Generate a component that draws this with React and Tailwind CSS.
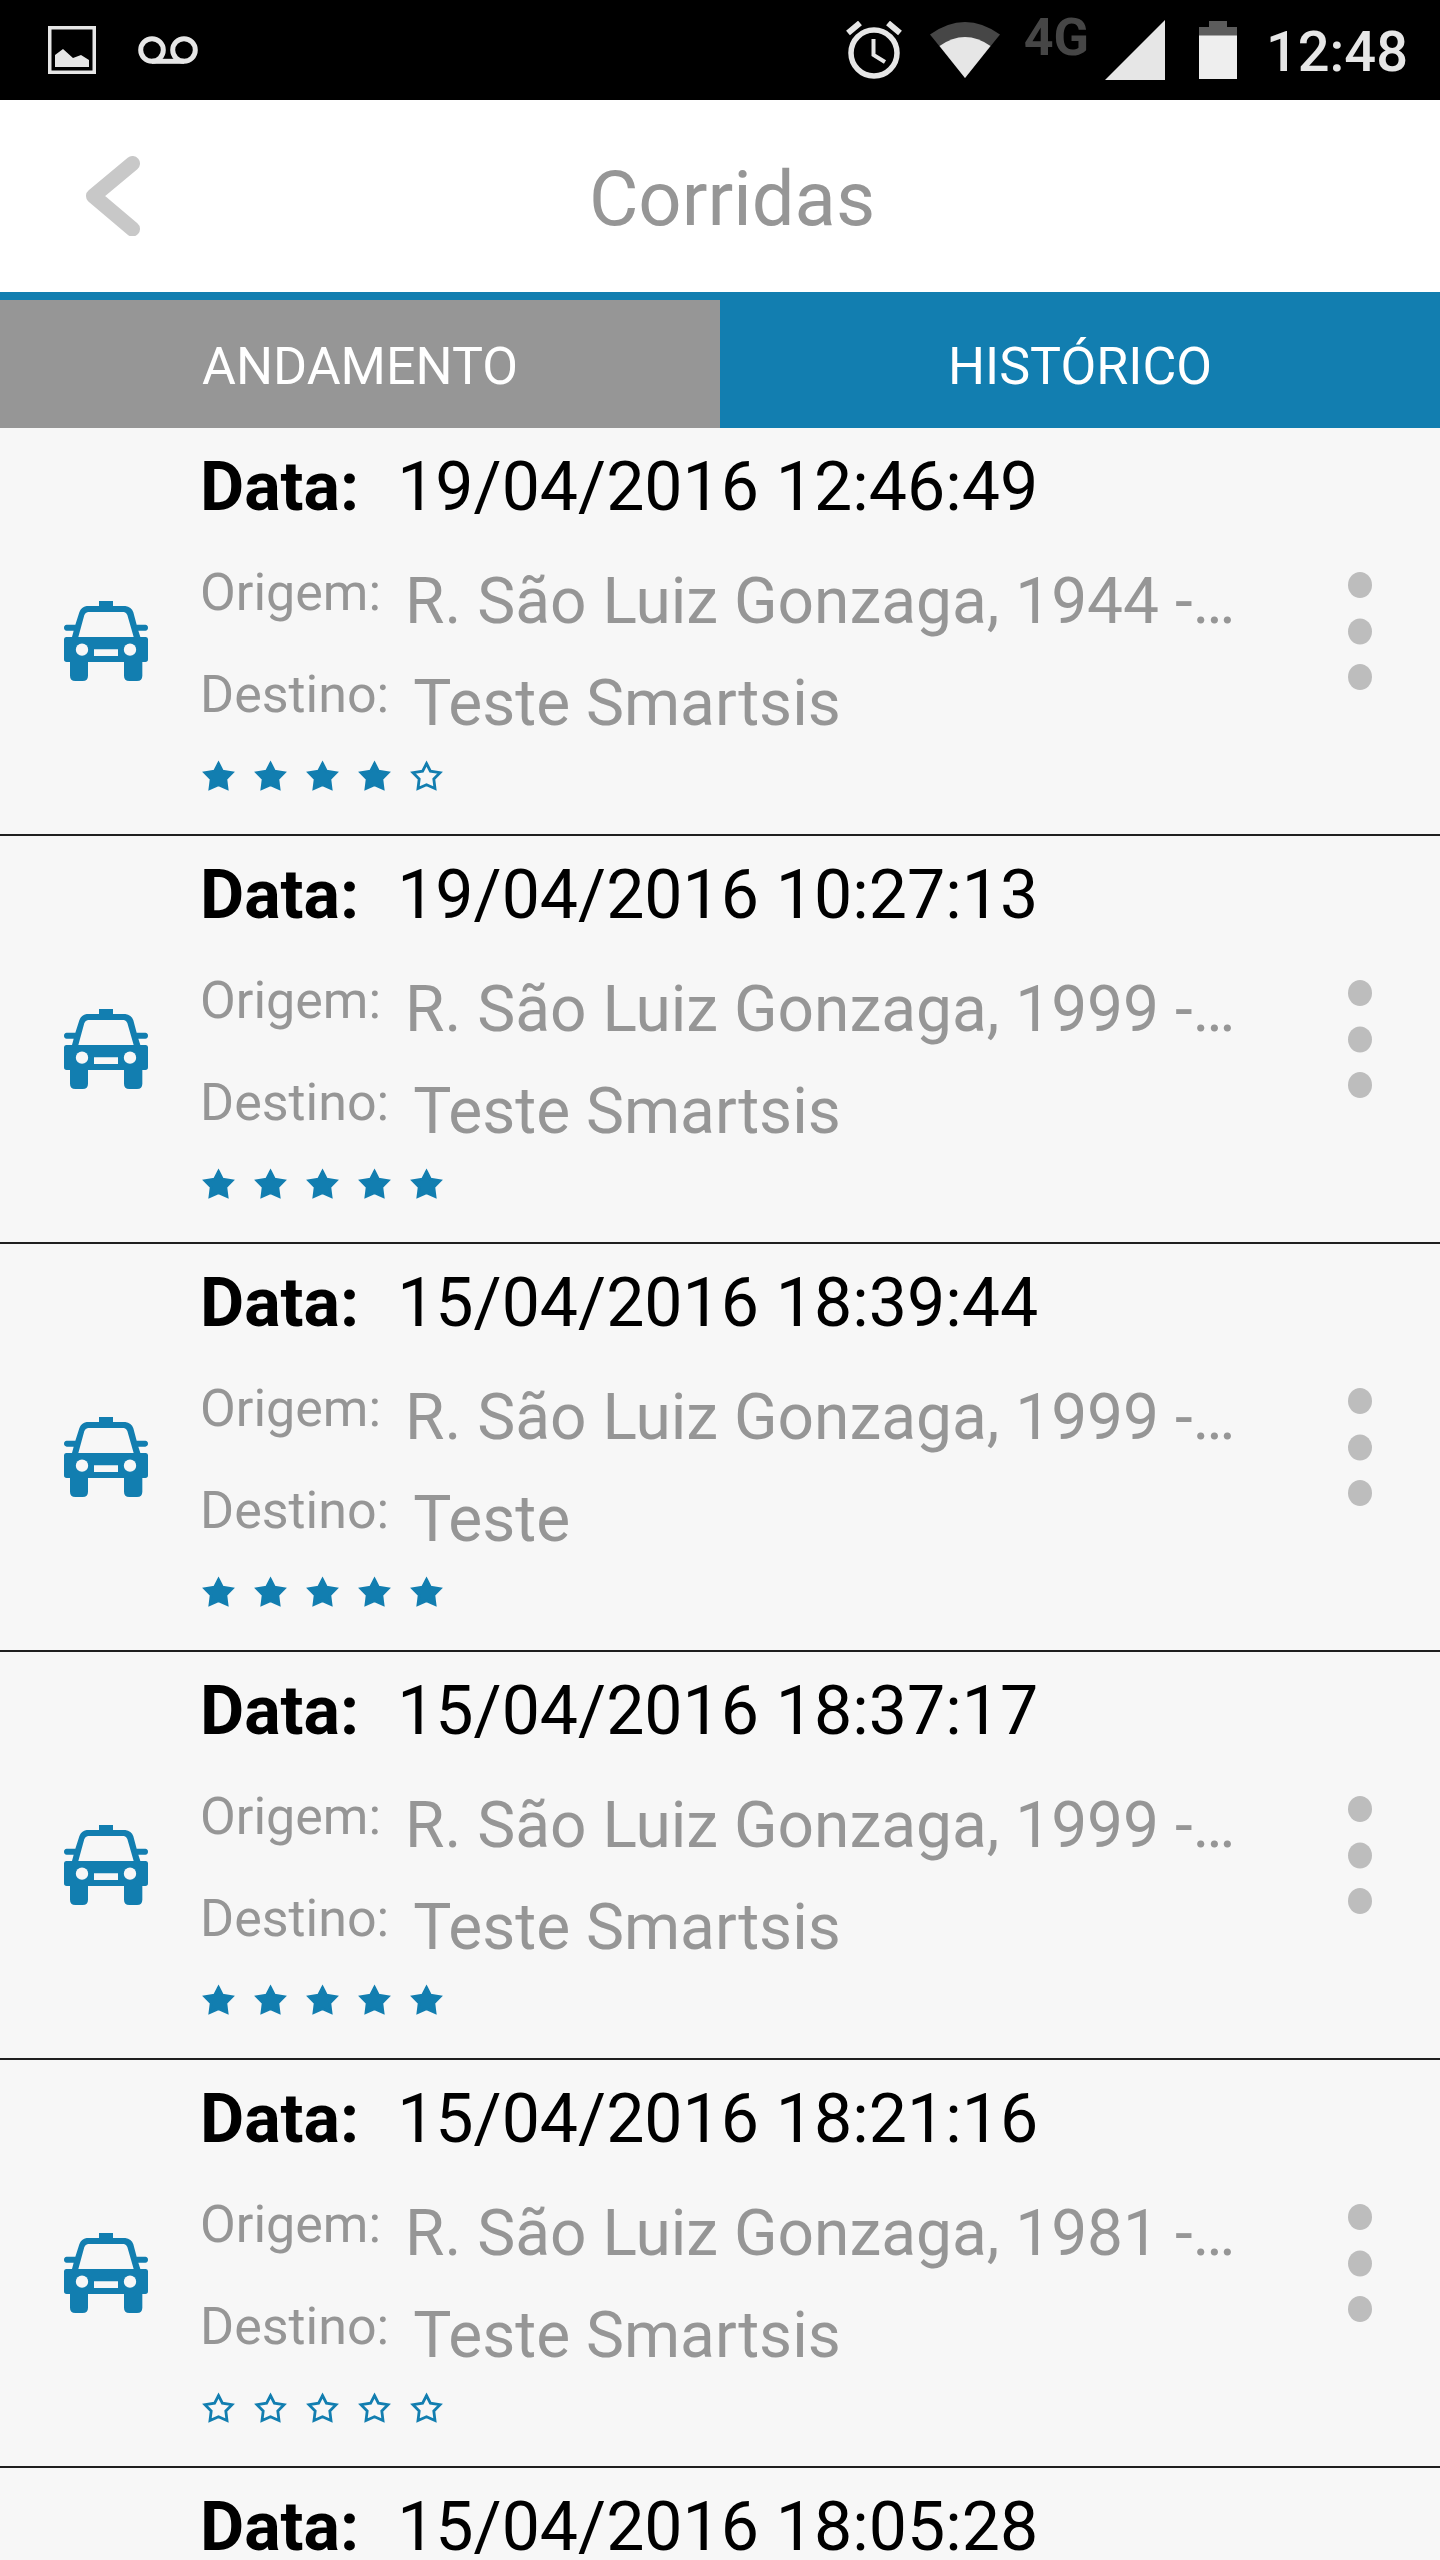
import React from 'react';
import { useState } from 'react';

const rides = [
  { id: 1, date: '19/04/2016 12:46:49', from: 'R. São Luiz Gonzaga, 1944 -…', to: 'Teste Smartsis', rating: 4 },
  { id: 2, date: '19/04/2016 10:27:13', from: 'R. São Luiz Gonzaga, 1999 -…', to: 'Teste Smartsis', rating: 5 },
  { id: 3, date: '15/04/2016 18:39:44', from: 'R. São Luiz Gonzaga, 1999 -…', to: 'Teste', rating: 5 },
  { id: 4, date: '15/04/2016 18:37:17', from: 'R. São Luiz Gonzaga, 1999 -…', to: 'Teste Smartsis', rating: 5 },
  { id: 5, date: '15/04/2016 18:21:16', from: 'R. São Luiz Gonzaga, 1981 -…', to: 'Teste Smartsis', rating: 0 },
  { id: 6, date: '15/04/2016 18:05:28', from: 'R. São Luiz Gonzaga, 1981 -…', to: 'Teste Smartsis', rating: 0 },
];

const StatusBar = () => (
  <div className="flex h-[100px] shrink-0 items-center justify-between bg-black pl-12 pr-8 text-[#e6e6e6]">
    <div className="flex items-center gap-[42px]">
      <svg className="h-12 w-12" viewBox="0 0 48 48" fill="currentColor">
        <path fillRule="evenodd" d="M0 0H48V48H0ZM3.5 3.5V44.5H44.5V3.5Z" />
        <path d="M7 41V29L15 23L25 32L33 29L41 34V41Z" />
      </svg>
      <svg className="h-7 w-[60px]" viewBox="0 0 60 28" fill="none" stroke="currentColor" strokeWidth="5">
        <circle cx="14" cy="14" r="11.3" />
        <circle cx="46" cy="14" r="11.3" />
        <path d="M14 25.3H46" />
      </svg>
    </div>
    <div className="flex items-center">
      <svg className="h-[58px] w-14" viewBox="0 0 56 58" fill="none" stroke="currentColor">
        <circle cx="28" cy="32" r="23" strokeWidth="5.5" />
        <path d="M2 12L14 2M54 12L42 2" strokeWidth="6" />
        <path d="M27.5 18V34L39 41" strokeWidth="4" />
      </svg>
      <svg className="ml-7 h-14 w-[70px]" viewBox="0 0 70 56">
        <path d="M0 12.5Q35 -12.5 70 12.5L35 56Z" fill="#464646" />
        <path d="M9.5 24Q35 6 60.5 24L35 56Z" fill="currentColor" />
      </svg>
      <span className="mb-6 ml-6 text-[52px] font-bold leading-[56px] text-[#464646]">4G</span>
      <svg className="ml-4 h-[60px] w-[60px]" viewBox="0 0 60 60" fill="currentColor">
        <path d="M60 0V60H0Z" />
      </svg>
      <svg className="ml-[34px] h-[58px] w-[38px]" viewBox="0 0 38 58">
        <path d="M10 0H28V6H38V15H0V6H10Z" fill="#5c5c5c" />
        <path d="M0 14.5H38V58H0Z" fill="#eeeeee" />
      </svg>
      <span className="ml-[29px] pt-1 text-[56px] font-medium leading-[64px]">12:48</span>
    </div>
  </div>
);

const TaxiIcon = () => (
  <svg className="h-20 w-[84px]" viewBox="0 0 252 240" fill="#127eb0">
    <path d="M105 0H147V16H105Z" />
    <path
      fillRule="evenodd"
      d="M68 15H184Q202 17 208 34L218 71H244Q252 72 252 80T244 89H223L229 108H246Q252 109 252 115V175Q252 183 244 183H235V224Q235 240 219 240H196Q180 240 180 224V183H72V224Q72 240 56 240H34Q18 240 18 224V183H8Q0 183 0 175V115Q0 109 6 108H24L29 89H8Q0 88 0 80T8 71H34L46 34Q52 17 68 15ZM72 33Q64 34 61 42L43 108H209L190 42Q187 34 180 33ZM90 145V165H162V145Z"
    />
    <circle cx="54" cy="146" r="18.5" fill="#f7f7f7" />
    <circle cx="198" cy="146" r="18.5" fill="#f7f7f7" />
  </svg>
);

const Star = ({ filled }) => (
  <svg className="h-8 w-9" viewBox="0 0 36 32" stroke="#127eb0" strokeWidth="2.8" fill={filled ? '#127eb0' : 'none'}>
    <path d="M18.500 4.500L22.400 12.200L32 13.700L25.800 20L27 29.500L18.500 25.700L10 29.500L11.200 20L5 13.700L14.600 12.200Z" />
  </svg>
);

const RideRow = ({ ride }) => (
  <li className="flex border-b-2 border-[#1f1f1f] bg-[#f7f7f7]">
    <div className="flex w-[200px] shrink-0 items-center pl-16 pt-5">
      <TaxiIcon />
    </div>
    <div className="min-w-0 flex-1 pb-[43px] pt-5">
      <p className="flex gap-[38px] whitespace-nowrap text-[68px] leading-[78px] text-black">
        <strong className="font-bold">Data:</strong>
        <span>{ride.date}</span>
      </p>
      <p className="mt-[37px] flex gap-6 whitespace-nowrap text-[#969696]">
        <span className="text-[52px] leading-[60px]">Origem:</span>
        <span className="text-[64px] leading-[78px]">{ride.from}</span>
      </p>
      <p className="mt-6 flex gap-6 whitespace-nowrap text-[#969696]">
        <span className="text-[52px] leading-[60px]">Destino:</span>
        <span className="text-[64px] leading-[78px]">{ride.to}</span>
      </p>
      <div className="mt-4 flex gap-4" role="img" aria-label={`${ride.rating} de 5 estrelas`}>
        {[1, 2, 3, 4, 5].map((n) => (
          <Star key={n} filled={n <= ride.rating} />
        ))}
      </div>
    </div>
    <button type="button" aria-label="Mais opções" className="flex items-center pl-10 pr-[68px]">
      <svg className="h-[118px] w-6" viewBox="0 0 24 118" fill="#bdbdbd">
        <ellipse cx="12" cy="13" rx="12" ry="13" />
        <ellipse cx="12" cy="59.5" rx="12" ry="13" />
        <ellipse cx="12" cy="105" rx="12" ry="13" />
      </svg>
    </button>
  </li>
);

const App = () => {
  const [tab, setTab] = useState('historico');

  return (
    <div className="flex h-screen flex-col bg-[#f7f7f7] font-['Roboto',sans-serif]">
      <StatusBar />
      <header className="grid h-[200px] shrink-0 grid-cols-[160px_1fr_136px] items-center border-b-8 border-[#127eb0] bg-white">
        <button type="button" aria-label="Voltar" className="flex pl-[86px]">
          <svg className="h-20 w-[54px]" viewBox="0 0 54 80" fill="none" stroke="#c8c8c8" strokeWidth="15" strokeLinecap="round" strokeLinejoin="round">
            <path d="M46.5 7.5L7.5 40L46.5 73" />
          </svg>
        </button>
        <h1 className="pt-1.5 text-center text-[76px] leading-[90px] text-[#969696]">Corridas</h1>
      </header>
      <div className="grid shrink-0 grid-cols-2 text-[52px] leading-[122px] text-white" role="tablist">
        <button
          type="button"
          role="tab"
          aria-selected={tab === 'andamento'}
          onClick={() => setTab('andamento')}
          className={tab === 'andamento' ? 'bg-[#127eb0] pt-1.5' : 'bg-[#969696] pt-1.5'}
        >
          ANDAMENTO
        </button>
        <button
          type="button"
          role="tab"
          aria-selected={tab === 'historico'}
          onClick={() => setTab('historico')}
          className={tab === 'historico' ? 'bg-[#127eb0] pt-1.5' : 'bg-[#969696] pt-1.5'}
        >
          HISTÓRICO
        </button>
      </div>
      <ul className="min-h-0 flex-1 overflow-y-auto [scrollbar-width:none]">
        {rides.map((ride) => (
          <RideRow key={ride.id} ride={ride} />
        ))}
      </ul>
    </div>
  );
};

export default App;
